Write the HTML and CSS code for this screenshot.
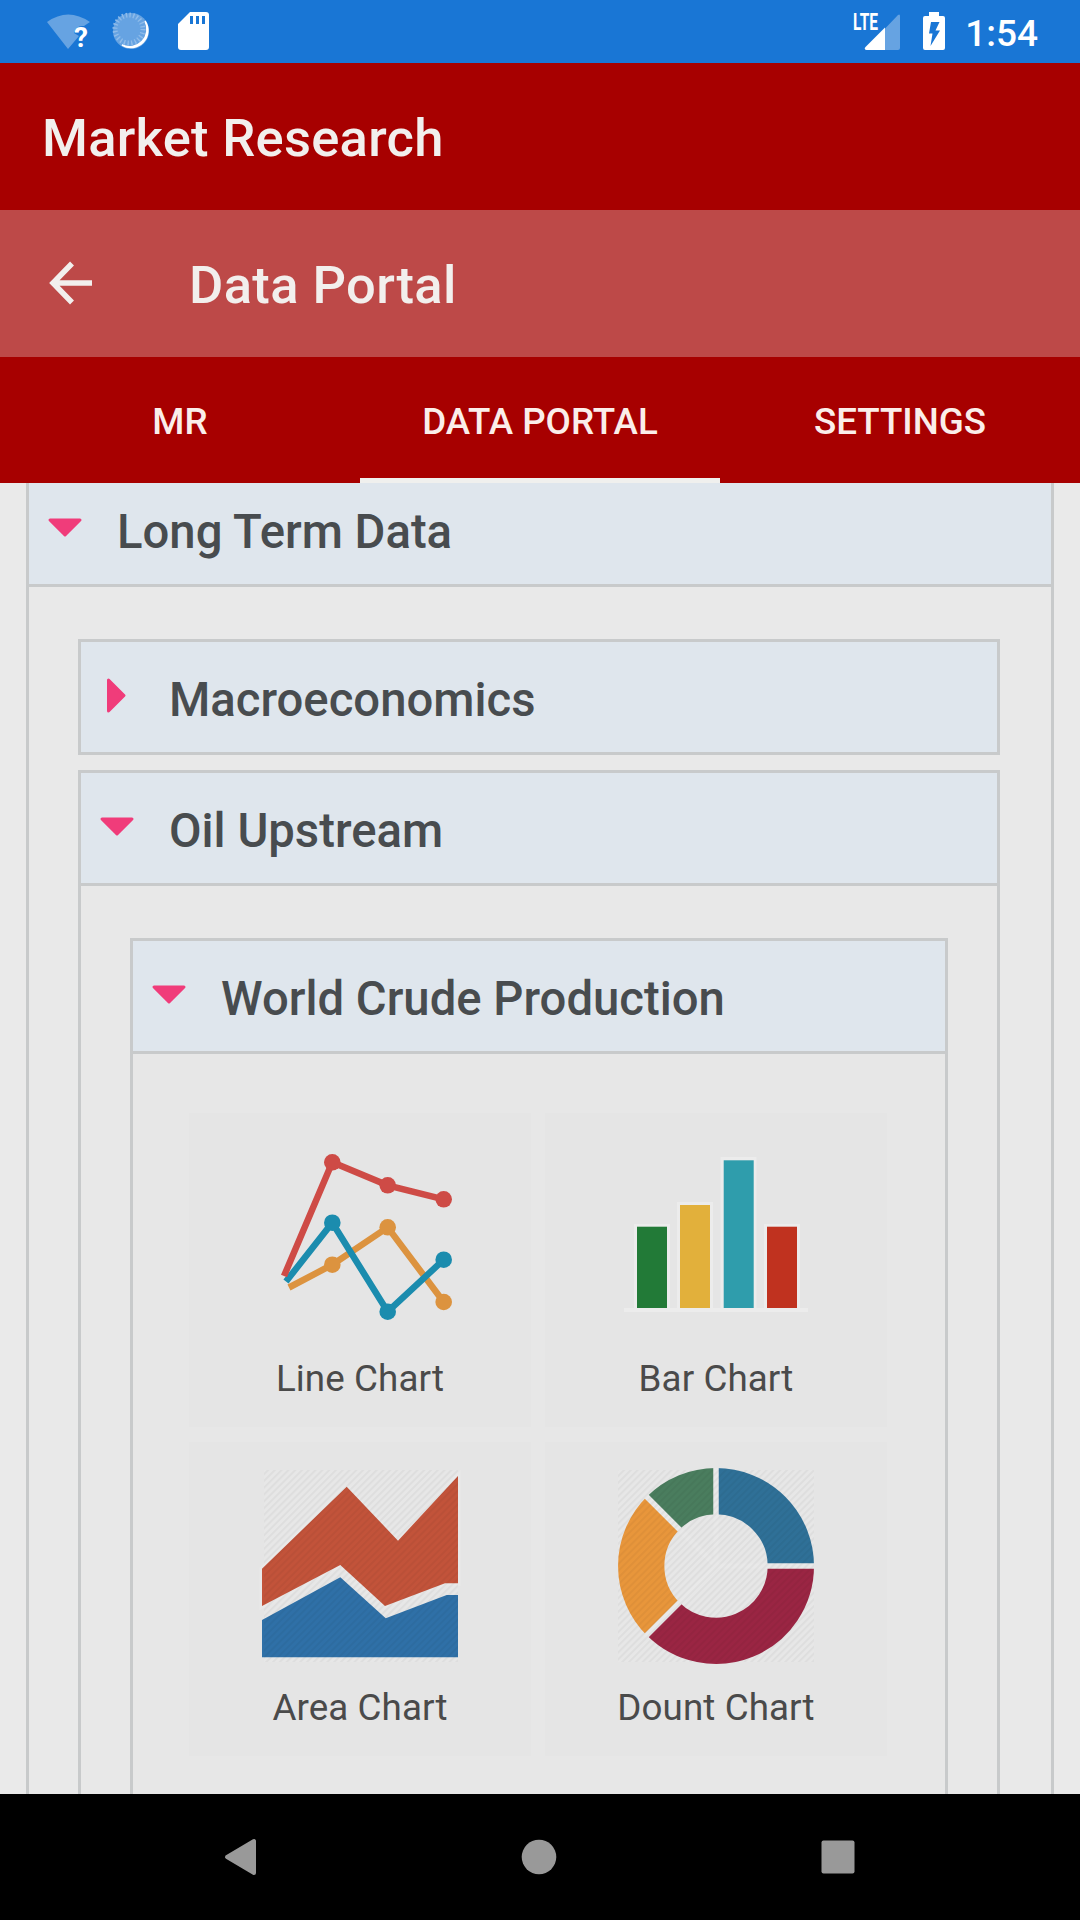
FILE: index.html
```
<!DOCTYPE html>
<html lang="en">
<head>
    <meta charset="UTF-8">
    <title>Market Research</title>
    <link rel="stylesheet" href="styles.css">
</head>
<body>
    <!-- Status bar -->
    <div class="status-bar">
        <div class="status-left">
            <svg class="wifi" width="46" height="40" viewBox="0 0 46 40">
                <path d="M0 10 Q21 -5 43 10 L37 14 Q29 13 27 21 L32 24 L21 37 Z" fill="#66a3e2"/>
                <text x="27" y="34.500" class="wifi-mark">?</text>
            </svg>
            <svg class="sync" width="40" height="40" viewBox="0 0 40 40">
                <circle cx="20" cy="20" r="18" fill="#66a3e2"/>
                <path d="M34 10 A17 17 0 0 1 11 34 A17.500 17.500 0 0 0 34 10" fill="#fff" stroke="#fff" stroke-width="1.500"/>
                <circle cx="18" cy="18" r="14" fill="none" stroke="#8fbcea" stroke-width="5" stroke-dasharray="1.400 2.265"/>
            </svg>
            <svg class="sd" width="32" height="38" viewBox="0 0 32 38">
                <path d="M12 0 H28 Q31 0 31 3 V35 Q31 38 28 38 H3 Q0 38 0 35 V12 Z" fill="#fff"/>
                <path d="M12 4 h3 v8 h-3z M18 4 h3 v8 h-3z M24 4 h3 v8 h-3z" fill="#1976d5"/>
            </svg>
        </div>
        <div class="status-right">
            <svg class="signal" width="48" height="38" viewBox="0 0 48 38">
                <path d="M11.500 37 L44 3 Q46 1.500 46 4 V36 Q46 38 44 38 H12 Q10 38 11.500 37" fill="#66a3e2"/>
                <path d="M11.500 35 L31 15.500 V38 H12.500 Q9.500 37 11.500 35" fill="#fff"/>
                <text x="-1" y="18" class="lte" textLength="25" lengthAdjust="spacingAndGlyphs">LTE</text>
            </svg>
            <svg class="battery" width="22" height="38" viewBox="0 0 22 38">
                <path d="M6 0 H16 V4 H20 Q22 4 22 6 V36 Q22 38 20 38 H2 Q0 38 0 36 V6 Q0 4 2 4 H6 Z" fill="#fff"/>
                <path d="M8 10 H16.500 L12.500 18.500 H17 L7.500 34 L9.500 21.500 H6 Z" fill="#1976d5"/>
            </svg>
            <span class="clock">1:54</span>
        </div>
    </div>

    <!-- Header -->
    <div class="app-bar">Market Research</div>
    <div class="sub-bar">
        <svg class="back" width="42" height="42" viewBox="0 0 42 42">
            <path d="M42 21 H4 M22 1.500 L3 21 L22 40.500" fill="none" stroke="#f2efed" stroke-width="5.500"/>
        </svg>
        <span>Data Portal</span>
    </div>
    <div class="tabs">
        <div class="tab">MR</div>
        <div class="tab active">DATA PORTAL</div>
        <div class="tab">SETTINGS</div>
    </div>

    <!-- Accordion tree -->
    <div class="content">
        <div class="panel level1">
            <div class="panel-title">
                <svg class="arrow" width="36" height="36" viewBox="0 0 36 36"><path d="M3 11 H33 L18 26 Z"/></svg>
                Long Term Data
            </div>
            <div class="panel-body">
                <div class="panel level2">
                    <div class="panel-title">
                        <svg class="arrow" width="36" height="36" viewBox="0 0 36 36"><path d="M9.500 3 V34 L25 18.500 Z"/></svg>
                        Macroeconomics
                    </div>
                </div>
                <div class="panel level2">
                    <div class="panel-title">
                        <svg class="arrow" width="36" height="36" viewBox="0 0 36 36"><path d="M3 11 H33 L18 26 Z"/></svg>
                        Oil Upstream
                    </div>
                    <div class="panel-body">
                        <div class="panel level3">
                            <div class="panel-title">
                                <svg class="arrow" width="36" height="36" viewBox="0 0 36 36"><path d="M3 11 H33 L18 26 Z"/></svg>
                                World Crude Production
                            </div>
                            <div class="charts">
                                <div class="card">
                                    <svg width="196" height="196" viewBox="0 0 196 196">
                                        <g fill="none" stroke-width="6.500">
                                            <path d="M27 148.500 L70.300 125.700 L125.700 88.300 L181.700 163" stroke="#dc933f"/>
                                            <path d="M24 142.500 L70.300 83.700 L125.700 172.700 L181.700 120.700" stroke="#1b8cae"/>
                                            <path d="M22 137 L70.300 23.300 L125.700 46.300 L181.700 60.300" stroke="#ce4b46"/>
                                        </g>
                                        <g fill="#dc933f"><circle cx="70.300" cy="125.700" r="8.300"/><circle cx="125.700" cy="88.300" r="8.300"/><circle cx="181.700" cy="163" r="8.300"/></g>
                                        <g fill="#1b8cae"><circle cx="70.300" cy="83.700" r="8.300"/><circle cx="125.700" cy="172.700" r="8.300"/><circle cx="181.700" cy="120.700" r="8.300"/></g>
                                        <g fill="#ce4b46"><circle cx="70.300" cy="23.300" r="8.300"/><circle cx="125.700" cy="46.300" r="8.300"/><circle cx="181.700" cy="60.300" r="8.300"/></g>
                                    </svg>
                                    <span>Line Chart</span>
                                </div>
                                <div class="card">
                                    <svg width="196" height="196" viewBox="0 0 196 196">
                                        <path d="M6 169 H190 V173 H6 Z M16 85 H52 V170 H16 Z M59 63 H95 V170 H59 Z M102.500 18 H138.500 V170 H102.500 Z M146 85 H182 V170 H146 Z" fill="#ececec"/>
                                        <rect x="19" y="87.700" width="30" height="81.300" fill="#227a37"/>
                                        <rect x="62" y="66" width="30" height="103" fill="#e2b03b"/>
                                        <rect x="105.700" y="21.300" width="30" height="147.700" fill="#2f9dac"/>
                                        <rect x="149" y="87.700" width="30" height="81.300" fill="#c0321f"/>
                                    </svg>
                                    <span>Bar Chart</span>
                                </div>
                                <div class="card">
                                    <svg width="196" height="196" viewBox="0 0 196 196">
                                        <defs>
                                            <pattern id="hatch" width="4.800" height="4.800" patternUnits="userSpaceOnUse" patternTransform="rotate(45)">
                                                <rect width="2" height="4.800" fill="#000"/>
                                            </pattern>
                                        </defs>
                                        <rect x="2" y="2" width="194" height="192" fill="#e7e7e7"/>
                                        <path d="M0 100.700 L84.700 18.700 L136 72.700 L196 8 V115.300 H183 L123 138 L78.300 97 L0 138 Z" fill="#c2533a" stroke="#e9e9e9" stroke-width="5" paint-order="stroke"/>
                                        <path d="M0 152 L78.300 109.300 L123.700 150.300 L184.700 127 H196 V189.300 H0 Z" fill="#2f70a7"/>
                                        <rect x="2" y="2" width="194" height="192" fill="url(#hatch)" opacity="0.04"/>
                                    </svg>
                                    <span>Area Chart</span>
                                </div>
                                <div class="card">
                                    <svg width="196" height="196" viewBox="0 0 196 196">
                                        <rect x="0" y="2" width="196" height="192" fill="#e7e7e7"/>
                                        <g fill="none" stroke-width="46.300">
                                            <path d="M98 23.150 A74.850 74.850 0 0 1 172.850 98" stroke="#2f7097"/>
                                            <path d="M172.850 98 A74.850 74.850 0 0 1 45.100 150.900" stroke="#9a2543"/>
                                            <path d="M45.100 150.900 A74.850 74.850 0 0 1 45.100 45.100" stroke="#e8963b"/>
                                            <path d="M45.100 45.100 A74.850 74.850 0 0 1 98 23.150" stroke="#4a7d5e"/>
                                        </g>
                                        <path d="M98 0 V98 H196 M27 27 L98 98 L27 169" fill="none" stroke="#e9e9e9" stroke-width="5.500"/>
                                        <rect x="0" y="2" width="196" height="192" fill="url(#hatch)" opacity="0.04"/>
                                    </svg>
                                    <span>Dount Chart</span>
                                </div>
                            </div>
                        </div>
                    </div>
                </div>
            </div>
        </div>
    </div>

    <!-- System navigation -->
    <div class="nav-bar">
        <svg width="36" height="40" viewBox="0 0 36 40"><path d="M32 4 V36 L5 20 Z" fill="#999" stroke="#999" stroke-width="4" stroke-linejoin="round"/></svg>
        <svg width="36" height="36" viewBox="0 0 36 36"><circle cx="18" cy="18" r="17.300" fill="#999"/></svg>
        <svg width="36" height="36" viewBox="0 0 36 36"><rect x="1.500" y="1.500" width="33" height="33" rx="2" fill="#999"/></svg>
    </div>
</body>
</html>
```
FILE: styles.css
```
* {
    box-sizing: border-box;
}

body {
    margin: 0;
    height: 1920px;
    overflow: hidden;
    display: flex;
    flex-direction: column;
    background: #eaeaea;
    font-family: Roboto, sans-serif;
}

svg {
    display: block;
    flex: none;
    overflow: visible;
}

/* Status bar */
.status-bar {
    height: 63px;
    flex: none;
    display: flex;
    justify-content: space-between;
    background: #1976d5;
    color: #fff;
}

.status-left,
.status-right {
    display: flex;
    align-items: flex-start;
    padding-top: 12px;
}

.status-left {
    padding-left: 47px;
}

.status-right {
    padding-right: 42px;
}

.wifi-mark {
    font-size: 28px;
    font-weight: 700;
    fill: #fff;
}

.sync {
    margin-left: 18px;
    margin-top: -1px;
}

.sd {
    margin-left: 27px;
}

.lte {
    font-size: 23px;
    font-weight: 700;
    fill: #fff;
}

.battery {
    margin-left: 21px;
}

.clock {
    margin-left: 20px;
    font-size: 37px;
    font-weight: 500;
    line-height: 43px;
}

/* Header */
.app-bar,
.sub-bar {
    height: 147px;
    flex: none;
    display: flex;
    align-items: center;
    color: #f2efed;
    font-size: 52.5px;
    font-weight: 500;
    letter-spacing: 0.27px;
}

.app-bar {
    padding: 3px 0 0 42px;
    background: #a70000;
}

.sub-bar {
    padding: 3px 0 0 50px;
    background: #bd4948;
    letter-spacing: 0.4px;
}

.back {
    margin-top: -4px;
    margin-right: 97px;
}

.tabs {
    height: 126px;
    flex: none;
    display: flex;
    background: #a70000;
}

.tab {
    flex: 1;
    padding-top: 6px;
    border-bottom: 5px solid transparent;
    text-align: center;
    line-height: 118px;
    font-size: 36.75px;
    font-weight: 500;
    color: #fbeeea;
}

.tab.active {
    border-bottom-color: #f0f0ee;
}

/* Accordion tree */
.content {
    flex: 1;
    min-height: 0;
    overflow: hidden;
    padding: 0 26px;
}

.panel {
    border: 3px solid #c8cacb;
}

.level1 {
    height: 1400px;
    margin-top: -12px;
    background: #e9e9e9;
}

.level2 {
    background: #e8e8e8;
}

.level3 {
    background: #e7e7e7;
}

.level2 + .level2 {
    margin-top: 15px;
}

.panel-title {
    height: 110px;
    display: flex;
    align-items: center;
    padding: 6px 0 0 18px;
    background: #dfe6ed;
    color: #484c4f;
    font-size: 47.25px;
    font-weight: 500;
}

.arrow {
    margin-top: -10px;
    margin-right: 34px;
    fill: #f03c7a;
    stroke: #f03c7a;
    stroke-width: 3;
    stroke-linejoin: round;
}

.panel-body {
    padding: 52px 51px 52px 49px;
    border-top: 3px solid #c8cacb;
}

.level2 .panel-body {
    padding-right: 49px;
}

.charts {
    display: grid;
    grid-template-columns: 342px 342px;
    gap: 15px 14px;
    padding: 59px 0 59px 56px;
    border-top: 3px solid #c8cacb;
}

.card {
    height: 314px;
    display: flex;
    flex-direction: column;
    align-items: center;
    padding-top: 26px;
    background: #e5e5e5;
}

.card span {
    margin-top: 22px;
    font-size: 36.75px;
    line-height: 44px;
    letter-spacing: 0.1px;
    color: #4a4a4a;
}

/* System navigation */
.nav-bar {
    height: 126px;
    flex: none;
    display: flex;
    align-items: center;
    justify-content: space-between;
    padding: 0 224px 0 222px;
    background: #000;
}
```
